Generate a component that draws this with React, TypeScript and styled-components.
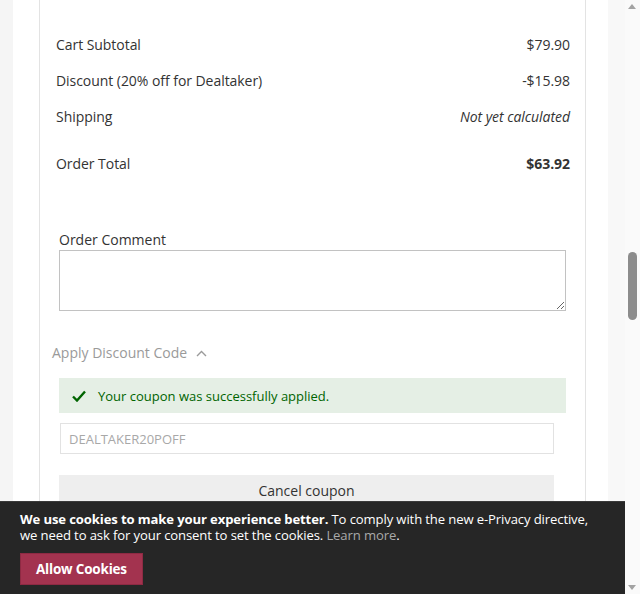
import React from "react";
import styled, { createGlobalStyle } from "styled-components";

const Global = createGlobalStyle`
  html, body { margin: 0; padding: 0; }
  body {
    font-family: "Open Sans", "Liberation Sans", sans-serif;
    color: #333;
    background: #f5f5f5;
    overflow: hidden;
  }
`;

const Frame = styled.div`
  display: flex;
  width: 640px;
  height: 594px;
  overflow: hidden;
`;

const Page = styled.div`
  flex: 1;
  display: flex;
  background: #f5f5f5;
  padding-left: 13px;
`;

const Main = styled.div`
  width: 595px;
  background: #fff;
  padding: 0 22px 0 26px;
  box-sizing: border-box;
`;

const RightGutter = styled.div`
  flex: 1;
  background: #f8f8f8;
`;

const Card = styled.div`
  border-left: 1px solid #e3e3e3;
  border-right: 1px solid #e3e3e3;
  height: 594px;
  padding: 27px 15px 0 16px;
  box-sizing: border-box;
  display: flex;
  flex-direction: column;
`;

const Row = styled.div<{ $gap?: number }>`
  display: flex;
  justify-content: space-between;
  align-items: center;
  height: 36px;
  font-size: 14px;
  letter-spacing: -0.05px;
  line-height: 20px;
  margin-top: ${(p) => p.$gap ?? 0}px;
`;

const Value = styled.span<{ $italic?: boolean; $bold?: boolean }>`
  font-style: ${(p) => (p.$italic ? "italic" : "normal")};
  font-weight: ${(p) => (p.$bold ? 700 : 400)};
`;

const CommentBlock = styled.div`
  margin: 48px 4px 0 3px;
  display: flex;
  flex-direction: column;
`;

const Label = styled.label`
  font-size: 14px;
  line-height: 20px;
  color: #333;
`;

const TextArea = styled.textarea`
  height: 61px;
  box-sizing: border-box;
  border: 1px solid #c2c2c2;
  resize: vertical;
  font-family: inherit;
  margin: 0;
  display: block;
`;

const DiscountToggle = styled.div`
  margin: 32px 0 0 -4px;
  display: flex;
  align-items: center;
  gap: 9px;
  font-size: 14px;
  line-height: 20px;
  color: #9a9a9a;
`;

const DiscountBody = styled.div`
  margin: 15px 4px 0 3px;
  display: flex;
  flex-direction: column;
`;

const Success = styled.div`
  height: 35px;
  background: #e5efe5;
  display: flex;
  align-items: center;
  padding-left: 13px;
  gap: 12px;
  font-size: 13px;
  color: #006400;
`;

const CouponInput = styled.div`
  margin: 10px 12px 0 1px;
  height: 31px;
  box-sizing: border-box;
  border: 1px solid #e2e2e2;
  display: flex;
  align-items: center;
  padding-left: 8px;
  font-size: 13px;
  color: #a8a8a8;
`;

const CancelButton = styled.button`
  margin: 21px 12px 0 0;
  height: 31px;
  border: none;
  background: #eeeeee;
  font-family: inherit;
  font-size: 14px;
  color: #333;
  padding: 0;
`;

const Scrollbar = styled.div`
  width: 15px;
  background: #fafafa;
  position: relative;
`;

const Thumb = styled.div`
  position: absolute;
  top: 252px;
  left: 3px;
  width: 9px;
  height: 68px;
  border-radius: 5px;
  background: #8c8c8c;
`;

const Arrow = styled.div<{ $down?: boolean }>`
  position: absolute;
  left: 3px;
  ${(p) => (p.$down ? "bottom: 4px;" : "top: 4px;")}
  width: 0;
  height: 0;
  border-left: 4.5px solid transparent;
  border-right: 4.5px solid transparent;
  ${(p) =>
    p.$down
      ? "border-top: 5px solid #a3a3a3;"
      : "border-bottom: 5px solid #a3a3a3;"}
`;

const CookieBar = styled.div`
  position: fixed;
  left: 0;
  bottom: 0;
  width: 625px;
  height: 93px;
  background: #262626;
  border-top: 1px solid #3a3a3a;
  box-sizing: border-box;
  padding: 10px 20px 0 20px;
  color: #fff;
  font-size: 13.1px;
  line-height: 15.5px;
`;

const CookieText = styled.p`
  margin: 0;
  letter-spacing: -0.12px;
`;

const Strong = styled.strong`
  font-weight: 700;
`;

const LearnMore = styled.a`
  color: #a9a9a9;
  text-decoration: none;
`;

const AllowButton = styled.button`
  margin-top: 10px;
  height: 32px;
  padding: 0 15px;
  background: #a3334f;
  border: 1px solid #8e2a43;
  color: #fff;
  font-family: inherit;
  font-weight: 700;
  font-size: 13.5px;
  letter-spacing: -0.2px;
`;

export default function App() {
  return (
    <>
      <Global />
      <Frame>
        <Page>
          <Main>
            <Card>
              <Row>
                <span>Cart Subtotal</span>
                <Value>$79.90</Value>
              </Row>
              <Row>
                <span>Discount (20% off for Dealtaker)</span>
                <Value>-$15.98</Value>
              </Row>
              <Row>
                <span>Shipping</span>
                <Value $italic>Not yet calculated</Value>
              </Row>
              <Row $gap={11}>
                <span>Order Total</span>
                <Value $bold>$63.92</Value>
              </Row>
              <CommentBlock>
                <Label>Order Comment</Label>
                <TextArea />
              </CommentBlock>
              <DiscountToggle>
                <span>Apply Discount Code</span>
                <svg width="11" height="7" viewBox="0 0 11 7">
                  <path d="M1 6 L5.5 1.5 L10 6" fill="none" stroke="#9a9a9a" strokeWidth="1.4" />
                </svg>
              </DiscountToggle>
              <DiscountBody>
                <Success>
                  <svg width="14" height="12" viewBox="0 0 14 12">
                    <path d="M1 6.5 L5 10.5 L13 1.5" fill="none" stroke="#006400" strokeWidth="2.4" />
                  </svg>
                  <span>Your coupon was successfully applied.</span>
                </Success>
                <CouponInput>DEALTAKER20POFF</CouponInput>
                <CancelButton>Cancel coupon</CancelButton>
              </DiscountBody>
            </Card>
          </Main>
          <RightGutter />
        </Page>
        <Scrollbar>
          <Arrow />
          <Thumb />
          <Arrow $down />
        </Scrollbar>
      </Frame>
      <CookieBar>
        <CookieText>
          <Strong>We use cookies to make your experience better.</Strong> To comply with the new e-Privacy directive, we need to ask for your consent to set the cookies.{" "}
          <LearnMore href="#">Learn more</LearnMore>.
        </CookieText>
        <AllowButton>Allow Cookies</AllowButton>
      </CookieBar>
    </>
  );
}
